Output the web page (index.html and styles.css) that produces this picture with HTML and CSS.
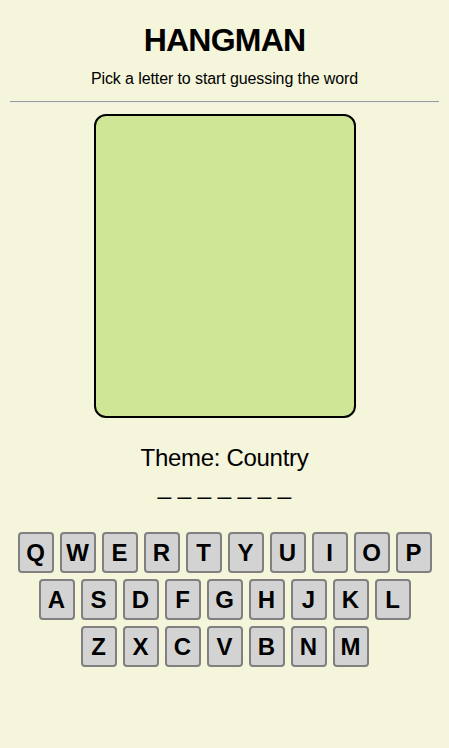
FILE: index.html
```html
<!DOCTYPE html>
<html lang="en">
<head>
<meta charset="utf-8">
<title>Hangman</title>
<link rel="stylesheet" href="styles.css">
</head>
<body>
<header class="header">
  <h1 class="title">HANGMAN</h1>
  <p class="subtitle">Pick a letter to start guessing the word</p>
</header>
<hr class="divider">
<main class="game">
  <div class="gallows"></div>
  <p class="theme">Theme: Country</p>
  <p class="word">_ _ _ _ _ _ _</p>
  <div class="keyboard">
    <div class="key-row">
      <button class="key">Q</button><button class="key">W</button><button class="key">E</button><button class="key">R</button><button class="key">T</button><button class="key">Y</button><button class="key">U</button><button class="key">I</button><button class="key">O</button><button class="key">P</button>
    </div>
    <div class="key-row">
      <button class="key">A</button><button class="key">S</button><button class="key">D</button><button class="key">F</button><button class="key">G</button><button class="key">H</button><button class="key">J</button><button class="key">K</button><button class="key">L</button>
    </div>
    <div class="key-row">
      <button class="key">Z</button><button class="key">X</button><button class="key">C</button><button class="key">V</button><button class="key">B</button><button class="key">N</button><button class="key">M</button>
    </div>
  </div>
</main>
</body>
</html>
```
FILE: styles.css
```css
html, body {
  background: #f5f5dc;
}
body {
  margin: 0;
  padding: 0 8px;
  font-family: "Liberation Sans", Arial, sans-serif;
  color: #000;
}
.header {
  text-align: center;
  padding-top: 22px;
}
.title {
  margin: 0;
  font-size: 32px;
  font-weight: bold;
  line-height: 37px;
  letter-spacing: -0.8px;
}
.subtitle {
  margin: 11px 0 0;
  font-size: 16px;
  line-height: 18px;
  letter-spacing: -0.1px;
}
.divider {
  margin: 13px 2px 0;
  border: 0;
  border-top: 1px solid #9a9a9a;
  border-bottom: 1px solid #eeeeee;
  height: 0;
}
.game {
  display: flex;
  flex-direction: column;
  align-items: center;
  padding-top: 11px;
}
.gallows {
  width: 258px;
  height: 300px;
  border: 2px solid #000;
  border-radius: 12px;
  background: #cfe697;
}
.theme {
  margin: 26px 0 0;
  font-size: 24px;
  line-height: 28px;
  letter-spacing: -0.3px;
}
.word {
  margin: 0;
  font-size: 24px;
  line-height: 28px;
}
.keyboard {
  margin-top: 29px;
  display: flex;
  flex-direction: column;
  align-items: center;
}
.key-row {
  display: flex;
  justify-content: center;
}
.key {
  width: 36px;
  height: 41px;
  margin: 3px;
  padding: 0;
  border: 2px solid #808080;
  border-radius: 4px;
  background: #d3d3d3;
  font-family: "Liberation Sans", Arial, sans-serif;
  font-size: 24px;
  font-weight: bold;
  color: #000;
  line-height: 1;
}
```
